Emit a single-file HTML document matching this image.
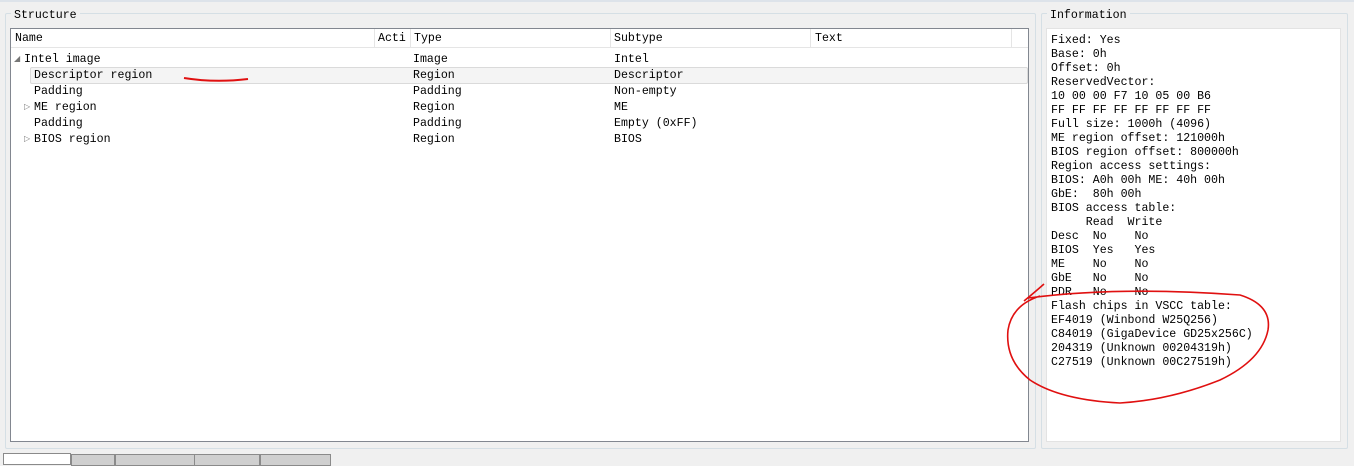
<!DOCTYPE html>
<html><head><style>
body{margin:0;width:1354px;height:461px;background:#f0f0f0;position:relative;overflow:hidden;font-family:"Liberation Mono",monospace;font-size:11.6px;color:#000}
.abs{position:absolute}
.grp{position:absolute;border:1px solid #d5dfe5;border-radius:2px}
.lbl{position:absolute;background:#f0f0f0;padding:0 3px;font-size:11.6px;line-height:14px}
.box{position:absolute;background:#fff;border:1px solid #828790}
.hdr{position:absolute;left:0;top:0;right:0;height:18px;background:#fff;border-bottom:1px solid #e5e5e5}
.hdr span{position:absolute;top:3px;line-height:14px}
.sep{position:absolute;top:0;width:1px;height:18px;background:#e5e5e5}
.row{position:absolute;height:16px;line-height:16px;left:0;right:0}
.row span{position:absolute;top:2px}
.info{position:absolute;left:4px;top:5px;line-height:14px;white-space:pre}
.tab{position:absolute;top:454px;height:10px;background:#cfcfcf;border:1px solid #8a8a8a}
.tri{position:absolute;font-size:8px;color:#777}
</style></head><body>
<div class="abs" style="left:0;top:0;width:1354px;height:2px;background:#dde3ea"></div>

<div class="grp" style="left:5px;top:13px;width:1029px;height:434px"></div>
<div class="lbl" style="left:11px;top:9px">Structure</div>
<div class="box" style="left:10px;top:28px;width:1017px;height:412px">
  <div class="hdr">
    <span style="left:4px">Name</span><div class="sep" style="left:363px"></div>
    <span style="left:367px">Acti</span><div class="sep" style="left:399px"></div>
    <span style="left:403px">Type</span><div class="sep" style="left:599px"></div>
    <span style="left:603px">Subtype</span><div class="sep" style="left:799px"></div>
    <span style="left:804px">Text</span><div class="sep" style="left:1000px"></div>
  </div>
  <div class="row" style="top:21px"><span class="tri" style="left:3px">&#9698;</span><span style="left:13px">Intel image</span><span style="left:402px">Image</span><span style="left:603px">Intel</span></div>
  <div class="abs" style="left:19px;top:38px;width:996px;height:15px;background:#f4f4f4;border:1px solid #dadada;border-radius:2px"></div>
  <div class="row" style="top:37px"><span style="left:23px">Descriptor region</span><span style="left:402px">Region</span><span style="left:603px">Descriptor</span></div>
  <div class="row" style="top:53px"><span style="left:23px">Padding</span><span style="left:402px">Padding</span><span style="left:603px">Non-empty</span></div>
  <div class="row" style="top:69px"><span class="tri" style="left:13px">&#9655;</span><span style="left:23px">ME region</span><span style="left:402px">Region</span><span style="left:603px">ME</span></div>
  <div class="row" style="top:85px"><span style="left:23px">Padding</span><span style="left:402px">Padding</span><span style="left:603px">Empty (0xFF)</span></div>
  <div class="row" style="top:101px"><span class="tri" style="left:13px">&#9655;</span><span style="left:23px">BIOS region</span><span style="left:402px">Region</span><span style="left:603px">BIOS</span></div>
</div>

<div class="grp" style="left:1041px;top:13px;width:305px;height:434px"></div>
<div class="lbl" style="left:1047px;top:9px">Information</div>
<div class="box" style="left:1046px;top:28px;width:293px;height:412px;border-color:#e3e3e3">
<div class="info">Fixed: Yes
Base: 0h
Offset: 0h
ReservedVector:
10 00 00 F7 10 05 00 B6
FF FF FF FF FF FF FF FF
Full size: 1000h (4096)
ME region offset: 121000h
BIOS region offset: 800000h
Region access settings:
BIOS: A0h 00h ME: 40h 00h
GbE:  80h 00h
BIOS access table:
     Read  Write
Desc  No    No
BIOS  Yes   Yes
ME    No    No
GbE   No    No
PDR   No    No
Flash chips in VSCC table:
EF4019 (Winbond W25Q256)
C84019 (GigaDevice GD25x256C)
204319 (Unknown 00204319h)
C27519 (Unknown 00C27519h)</div>
</div>

<div class="tab" style="left:3px;width:66px;background:#fff;top:453px"></div>
<div class="tab" style="left:71px;width:42px"></div>
<div class="tab" style="left:115px;width:78px"></div>
<div class="tab" style="left:194px;width:64px"></div>
<div class="tab" style="left:260px;width:69px"></div>

<svg class="abs" style="left:0;top:0" width="1354" height="461">
<path d="M184 78 Q215 83 248 79" stroke="#e01010" stroke-width="2" fill="none"/>
<path d="M1044 284 Q1035 292 1024 301 M1028 298 Q1120 286 1240 295 Q1272 305 1268 330 Q1262 360 1220 380 Q1170 400 1120 403 Q1060 400 1030 380 Q1005 360 1008 330 Q1012 305 1040 296" stroke="#e01010" stroke-width="1.6" fill="none"/>
</svg>
</body></html>
